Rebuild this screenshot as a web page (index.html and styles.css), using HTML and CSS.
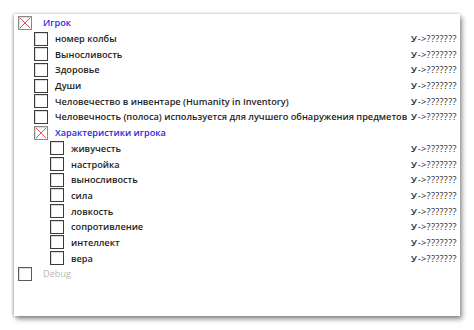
FILE: index.html
```html
<!DOCTYPE html>
<html>
<head>
<meta charset="utf-8">
<link rel="stylesheet" href="styles.css">
</head>
<body>
<div class="panel">
  <div class="row l0"><span class="cb on"><svg viewBox="0 0 14 14"><path d="M1 1L13 13M13 1L1 13" stroke="#e0303a" stroke-width="1"/></svg></span><span class="lbl grp">Игрок</span><span class="val"></span></div>
  <div class="row l1"><span class="cb"></span><span class="lbl">номер колбы</span><span class="val"><b>У</b>-&gt;???????</span></div>
  <div class="row l1"><span class="cb"></span><span class="lbl">Выносливость</span><span class="val"><b>У</b>-&gt;???????</span></div>
  <div class="row l1"><span class="cb"></span><span class="lbl">Здоровье</span><span class="val"><b>У</b>-&gt;???????</span></div>
  <div class="row l1"><span class="cb"></span><span class="lbl">Души</span><span class="val"><b>У</b>-&gt;???????</span></div>
  <div class="row l1"><span class="cb"></span><span class="lbl">Человечество в инвентаре (Humanity in Inventory)</span><span class="val"><b>У</b>-&gt;???????</span></div>
  <div class="row l1"><span class="cb"></span><span class="lbl">Человечность (полоса) используется для лучшего обнаружения предметов</span><span class="val"><b>У</b>-&gt;???????</span></div>
  <div class="row l1"><span class="cb on"><svg viewBox="0 0 14 14"><path d="M1 1L13 13M13 1L1 13" stroke="#e0303a" stroke-width="1"/></svg></span><span class="lbl grp">Характеристики игрока</span><span class="val"></span></div>
  <div class="row l2"><span class="cb"></span><span class="lbl">живучесть</span><span class="val"><b>У</b>-&gt;???????</span></div>
  <div class="row l2"><span class="cb"></span><span class="lbl">настройка</span><span class="val"><b>У</b>-&gt;???????</span></div>
  <div class="row l2"><span class="cb"></span><span class="lbl">выносливость</span><span class="val"><b>У</b>-&gt;???????</span></div>
  <div class="row l2"><span class="cb"></span><span class="lbl">сила</span><span class="val"><b>У</b>-&gt;???????</span></div>
  <div class="row l2"><span class="cb"></span><span class="lbl">ловкость</span><span class="val"><b>У</b>-&gt;???????</span></div>
  <div class="row l2"><span class="cb"></span><span class="lbl">сопротивление</span><span class="val"><b>У</b>-&gt;???????</span></div>
  <div class="row l2"><span class="cb"></span><span class="lbl">интеллект</span><span class="val"><b>У</b>-&gt;???????</span></div>
  <div class="row l2"><span class="cb"></span><span class="lbl">вера</span><span class="val"><b>У</b>-&gt;???????</span></div>
  <div class="row l0"><span class="cb dim"></span><span class="lbl off">Debug</span><span class="val"></span></div>
</div>
</body>
</html>
```
FILE: styles.css
```css
html, body {
  margin: 0;
  padding: 0;
  background: #ffffff;
}
body {
  width: 474px;
  height: 330px;
  overflow: hidden;
}
.panel {
  margin: 14px 0 0 14px;
  width: 446px;
  height: 302px;
  box-sizing: border-box;
  background: #ffffff;
  box-shadow: 2px 3px 5px rgba(0, 0, 0, 0.45), -1px 0 3px rgba(0, 0, 0, 0.25);
  overflow: hidden;
  padding-top: 1px;
  font-family: "Open Sans", "DejaVu Sans", sans-serif;
  font-size: 9.2px;
  font-weight: 600;
  color: #1e1e1e;
}
.row {
  display: grid;
  grid-template-columns: auto 1fr 49px;
  align-items: center;
  height: 15.7px;
  white-space: nowrap;
}
.row.l0 { padding-left: 4px; }
.row.l1 { padding-left: 20px; }
.row.l2 { padding-left: 36px; }
.cb {
  width: 14px;
  height: 14px;
  box-sizing: border-box;
  border: 1px solid #3c3c3c;
  box-shadow: inset 1px 1px 1px rgba(0,0,0,0.15);
  background: #fff;
  display: block;
}
.cb.on {
  border-color: #8a8a8a;
}
.cb.on svg {
  display: block;
  width: 12px;
  height: 12px;
}
.cb.dim {
  border-color: #5a5a5a;
}
.lbl {
  padding-left: 7px;
  line-height: 15px;
}
.l0 .lbl { padding-left: 11px; }
.lbl.grp {
  color: #2a2ae0;
}
.lbl.off {
  color: #b8b8b8;
  font-weight: 400;
}
.val {
  font-weight: 400;
  color: #222;
  letter-spacing: 0.35px;
}
.val b {
  font-weight: 600;
  letter-spacing: 0.8px;
}
```
